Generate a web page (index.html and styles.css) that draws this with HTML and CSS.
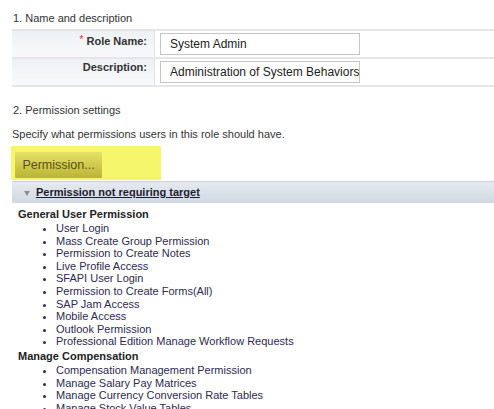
FILE: index.html
```html
<!DOCTYPE html>
<html>
<head>
<meta charset="utf-8">
<link rel="stylesheet" href="styles.css">
</head>
<body>
<div class="page">
  <div class="section-title first">1. Name and description</div>
  <table class="form">
    <tr>
      <td class="label"><span class="req">*</span> Role Name:</td>
      <td class="field"><input class="text-input" type="text" value="System Admin"></td>
    </tr>
    <tr>
      <td class="label">Description:</td>
      <td class="field"><input class="text-input" type="text" value="Administration of System Behaviors"></td>
    </tr>
  </table>

  <div class="section-title second">2. Permission settings</div>
  <div class="hint">Specify what permissions users in this role should have.</div>

  <div class="highlight"><button class="perm-btn" type="button">Permission...</button></div>

  <div class="group-header"><span class="tri"></span><span class="group-link">Permission not requiring target</span></div>

  <div class="perm-list">
    <div class="cat">General User Permission</div>
    <ul>
      <li>User Login</li>
      <li>Mass Create Group Permission</li>
      <li>Permission to Create Notes</li>
      <li>Live Profile Access</li>
      <li>SFAPI User Login</li>
      <li>Permission to Create Forms(All)</li>
      <li>SAP Jam Access</li>
      <li>Mobile Access</li>
      <li>Outlook Permission</li>
      <li>Professional Edition Manage Workflow Requests</li>
    </ul>
    <div class="cat">Manage Compensation</div>
    <ul>
      <li>Compensation Management Permission</li>
      <li>Manage Salary Pay Matrices</li>
      <li>Manage Currency Conversion Rate Tables</li>
      <li>Manage Stock Value Tables</li>
    </ul>
  </div>
</div>
</body>
</html>
```

FILE: styles.css
```css
html, body {
  margin: 0;
  padding: 0;
  background: #ffffff;
}

body {
  font-family: "Liberation Sans", Arial, sans-serif;
  font-size: 11px;
  color: #333333;
  overflow: hidden;
}

.page {
  padding-left: 12px;
}

.section-title {
  line-height: 13px;
  color: #333333;
  padding-left: 1px;
}

.section-title.first {
  padding-top: 12px;
  margin-bottom: 4px;
}

.section-title.second {
  margin-top: 17px;
}

.hint {
  margin-top: 11px;
  line-height: 13px;
  color: #333333;
}

.form {
  width: 482px;
  border-collapse: collapse;
}

.form tr {
  border-top: 2px solid #e6e6e6;
  border-bottom: 2px solid #e6e6e6;
}

.form td {
  padding: 2px 0 2px 0;
  vertical-align: top;
}

.form td.label {
  width: 135px;
  padding-right: 7px;
  padding-top: 2px;
  text-align: right;
  font-weight: bold;
  color: #333333;
  line-height: 13px;
  border-right: 1px solid #e2e2e2;
  background: linear-gradient(to bottom, #eef1f4, #f8f9fa);
}

.req {
  color: #e03030;
  font-weight: normal;
  font-size: 10px;
  vertical-align: 2px;
}

.form td.field {
  padding-left: 5px;
}

.text-input {
  box-sizing: border-box;
  width: 200px;
  height: 22px;
  margin: 0;
  padding: 0 0 0 9px;
  border: 1px solid #c4c4c4;
  font-family: "Liberation Sans", Arial, sans-serif;
  font-size: 12px;
  color: #222222;
  background: #ffffff;
  outline: none;
}

.highlight {
  margin-top: 5px;
  margin-left: -1px;
  width: 146px;
  padding: 6px 0 2px 4px;
  background: #f6f66c;
}

.perm-btn {
  display: block;
  width: 87px;
  height: 26px;
  margin: 0;
  padding: 0;
  border: none;
  border-radius: 1px;
  background: linear-gradient(to bottom, #e6e266, #c8c243 70%, #b9b33a);
  font-family: "Liberation Sans", Arial, sans-serif;
  font-size: 12.5px;
  color: #5a4f1c;
  text-align: center;
  line-height: 24px;
}

.group-header {
  margin-top: 1px;
  height: 21px;
  border-top: 1px solid #c9d1db;
  background: linear-gradient(to bottom, #e6eaf0, #d0d8e2);
  display: flex;
  align-items: center;
  padding-left: 12px;
}

.tri {
  width: 0;
  height: 0;
  border-left: 3px solid transparent;
  border-right: 3px solid transparent;
  border-top: 5px solid #8a8f98;
  margin-right: 6px;
  margin-top: 1px;
}

.group-link {
  font-weight: bold;
  text-decoration: underline;
  color: #1c1c30;
  line-height: 13px;
}

.perm-list {
  padding-left: 6px;
  padding-top: 3px;
}

.cat {
  font-weight: bold;
  color: #222222;
  line-height: 14px;
  margin-top: 1px;
  margin-bottom: 1px;
}

.perm-list ul {
  margin: 0;
  padding-left: 38px;
  list-style: disc;
}

.perm-list li {
  line-height: 12.6px;
  color: #2e2a50;
}
```
